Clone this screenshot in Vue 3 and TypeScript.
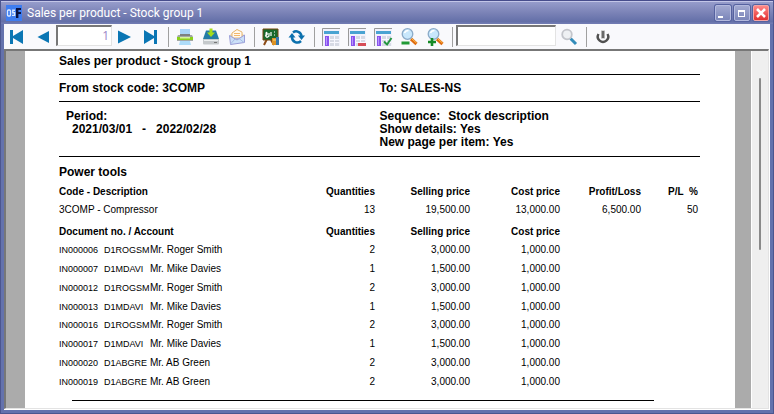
<script setup lang="ts">
import { ref } from 'vue'

interface Doc {
  no: string
  account: string
  name: string
  qty: string
  selling: string
  cost: string
}

const title = 'Sales per product - Stock group 1'
const page = ref('1')
const search = ref('')

const roger = { account: 'D1ROGSM', name: 'Mr. Roger Smith' }
const mike = { account: 'D1MDAVI', name: 'Mr. Mike Davies' }
const green = { account: 'D1ABGRE', name: 'Mr. AB Green' }
const two = { qty: '2', selling: '3,000.00', cost: '1,000.00' }
const one = { qty: '1', selling: '1,500.00', cost: '1,000.00' }

const docs: Doc[] = [
  { no: 'IN000006', ...roger, ...two },
  { no: 'IN000007', ...mike, ...one },
  { no: 'IN000012', ...roger, ...two },
  { no: 'IN000013', ...mike, ...one },
  { no: 'IN000016', ...roger, ...two },
  { no: 'IN000017', ...mike, ...one },
  { no: 'IN000020', ...green, ...two },
  { no: 'IN000019', ...green, ...two },
]
</script>

<template>
  <div class="window">
    <header class="titlebar">
      <svg class="logo" viewBox="0 0 16 16" aria-hidden="true">
        <rect width="16" height="16" fill="#3f7df0" />
        <rect x="1.5" y="5" width="3" height="6" rx="1" fill="none" stroke="#dbe8ff" stroke-width="1.3" />
        <path d="M9 5.3H6.8v2.5h1.8v2.6H6" fill="none" stroke="#dbe8ff" stroke-width="1.4" />
        <path d="M10 3h5v2h-2.6v2H15v2h-2.6v4H10z" fill="#0a1240" />
      </svg>
      <h1>{{ title }}</h1>
      <div class="controls">
        <button type="button" aria-label="Minimize">
          <svg viewBox="0 0 14 14"><path d="M2 10h5v2H2z" fill="#fff" /></svg>
        </button>
        <button type="button" aria-label="Maximize">
          <svg viewBox="0 0 14 14"><path d="M3 4h7v7H3zM4 6v4h5V6z" fill="#fff" fill-rule="evenodd" /></svg>
        </button>
        <button type="button" class="close" aria-label="Close">
          <svg viewBox="0 0 14 14"><path d="M3 3l8 8M11 3l-8 8" stroke="#fff" stroke-width="2.6" /></svg>
        </button>
      </div>
    </header>

    <div class="body">
      <nav class="toolbar">
        <button type="button" aria-label="First page">
          <svg viewBox="0 0 18 18"><path d="M2 2h3v6L15 2v14L5 10v6H2z" fill="#0b76b4" /></svg>
        </button>
        <button type="button" aria-label="Previous page">
          <svg viewBox="0 0 18 18"><path d="M15 3v12L3.500 9z" fill="#0b76b4" /></svg>
        </button>
        <input v-model="page" class="page" type="text" aria-label="Page number" />
        <button type="button" aria-label="Next page">
          <svg viewBox="0 0 18 18"><path d="M2 2.500v13L15 9z" fill="#0b76b4" /></svg>
        </button>
        <button type="button" aria-label="Last page">
          <svg viewBox="0 0 18 18"><path d="M15 2h-3v6L2 2v14l10-6v6h3z" fill="#0b76b4" /></svg>
        </button>
        <span class="sep"></span>
        <button type="button" aria-label="Print">
          <svg viewBox="0 0 18 18">
            <path d="M4 1h10v8H4z" fill="#a9d4f8" />
            <path d="M2 7h14l1 2v4H1V9z" fill="#a4a8a6" />
            <path d="M4 6h10v2H4z" fill="#7d8180" />
            <path d="M1 9h16v3H1z" fill="#8bd01c" />
            <path d="M4 9h10v1.500H4z" fill="#d6f59a" />
            <path d="M4 13h10l1 4H3z" fill="#aedcf9" />
          </svg>
        </button>
        <button type="button" aria-label="Save">
          <svg viewBox="0 0 18 18">
            <path d="M4 2.500h10L17 11H1z" fill="#237ba5" />
            <path d="M1 11h16v4.500a1 1 0 0 1-1 1H2a1 1 0 0 1-1-1z" fill="#c5c9cc" />
            <path d="M2 12h14v1H2z" fill="#eceff0" />
            <path d="M12 14.500h3" stroke="#777" />
            <path d="M7.500 0.500h3v4H13L9 9 5 4.500h2.500z" fill="#a4dc19" />
          </svg>
        </button>
        <button type="button" aria-label="E-mail">
          <svg viewBox="0 0 18 18">
            <path d="M2 7l7-6 7 6v7L2 16z" fill="#ecd9b6" />
            <path d="M4 5l5-3.500L14 4v6H4z" fill="#fffaf0" stroke="#e7b66e" />
            <path d="M6 5.500h6M6 7.500h6" stroke="#f3b86b" />
            <path d="M1.500 7.500L9 12l7.500-5v7.500l-14 2z" fill="#cbe0f8" stroke="#9a9dd8" />
            <path d="M2.500 16L7 11l4-.5 5 4" fill="none" stroke="#a6b9e3" />
          </svg>
        </button>
        <span class="sep"></span>
        <button type="button" aria-label="Design">
          <svg viewBox="0 0 18 18">
            <path d="M5 11l-3 6M9 12l3 5" stroke="#8c4b17" stroke-width="2" />
            <path d="M1 1h15v11H1z" fill="#17692c" stroke="#764710" />
            <path d="M3 8q3-1 2-3T4 7t3 1V5M9 4v4M12 4h1M12 7h1" fill="none" stroke="#fff" stroke-width="1.200" />
            <path d="M10 10h4v7h-4z" fill="#dc9225" />
            <path d="M14 9h3v8h-3z" fill="#3577ae" />
            <path d="M11 12h3" stroke="#f7d985" />
          </svg>
        </button>
        <button type="button" aria-label="Refresh">
          <svg viewBox="0 0 18 18">
            <path d="M5 4.500a5.300 5.300 0 0 1 8.500 3.500M13 13a5.300 5.300 0 0 1-9-4" fill="none" stroke="#0c70ad" stroke-width="2.500" />
            <path d="M10 7.500h7L13.500 12z" fill="#0c70ad" />
            <path d="M0.500 9.500h7L4 5z" fill="#0c70ad" />
          </svg>
        </button>
        <span class="sep"></span>
        <button v-for="kind in ['header', 'footer', 'check']" :key="kind" type="button" :aria-label="'Toggle ' + kind">
          <svg class="layout" viewBox="0 0 20 20">
            <path d="M1 19V1h18v18z" fill="#f2f2fb" />
            <path d="M1.500 19V1.500H19" fill="none" stroke="#999" />
            <path d="M3 4h15v3H3z" fill="#4aa3d2" />
            <path d="M4 9h4v10H4z" fill="#8a53ef" />
            <path d="M5 10h1v8H5z" fill="#b797fb" />
            <path d="M9 9h9v10H9z" fill="#d7dae5" />
            <path d="M9 12.500h9M9 15.500h9M13.500 9v10" stroke="#f8f8ff" />
            <path v-if="kind === 'footer'" d="M11 16h8v3h-8z" fill="#d64d58" />
            <path v-if="kind === 'check'" d="M11 14.500l3 3L18.500 11" fill="none" stroke="#249540" stroke-width="2" />
          </svg>
        </button>
        <button v-for="sign in ['out', 'in']" :key="sign" type="button" :aria-label="'Zoom ' + sign">
          <svg viewBox="0 0 18 18">
            <path d="M11 11l5.500 5" stroke="#df6b12" stroke-width="3.200" />
            <path d="M11.500 10.500l5 4.500" stroke="#ffc34d" />
            <circle cx="7.500" cy="6" r="5.300" fill="#c8e7fc" stroke="#8baac8" stroke-width="1.300" />
            <path d="M4.500 5q1-2.500 4-2.500" fill="none" stroke="#fff" stroke-width="1.500" />
            <path v-if="sign === 'out'" d="M1.500 15h8" stroke="#229a36" stroke-width="3" />
            <path v-else d="M2 14h8M6 10v8" stroke="#168a27" stroke-width="2.600" />
          </svg>
        </button>
        <span class="sep"></span>
        <input v-model="search" class="search" type="text" aria-label="Search text" />
        <button type="button" aria-label="Search">
          <svg viewBox="0 0 18 18">
            <path d="M10.500 10.500l5.500 5.500" stroke="#338cba" stroke-width="3" />
            <circle cx="7" cy="6.500" r="4.800" fill="#eef0f3" stroke="#c3c5cb" stroke-width="1.800" />
          </svg>
        </button>
        <span class="sep"></span>
        <button type="button" aria-label="Close report">
          <svg viewBox="0 0 18 18">
            <path d="M4.500 6a5.200 5.200 0 1 0 9 0" fill="none" stroke="#505050" stroke-width="2.400" />
            <path d="M9 2.500v8" stroke="#b0b0b0" stroke-width="4" />
            <path d="M9 3v7" stroke="#686868" stroke-width="2" />
          </svg>
        </button>
      </nav>

      <main class="viewer">
        <article class="paper">
          <h2 class="heading">{{ title }}</h2>
          <section class="range">
            <span>From stock code: 3COMP</span>
            <span>To: SALES-NS</span>
          </section>
          <section class="criteria">
            <div class="period">
              <p>Period:</p>
              <p class="dates"><span>2021/03/01</span><span>-</span><span>2022/02/28</span></p>
            </div>
            <div>
              <p class="sequence"><span>Sequence:</span><span>Stock description</span></p>
              <p>Show details: Yes</p>
              <p>New page per item: Yes</p>
            </div>
          </section>

          <h3>Power tools</h3>
          <table class="summary">
            <colgroup>
              <col /><col class="c-qty" /><col class="c-sell" /><col class="c-cost" /><col class="c-profit" /><col class="c-pct" />
            </colgroup>
            <thead>
              <tr><th>Code - Description</th><th>Quantities</th><th>Selling price</th><th>Cost price</th><th>Profit/Loss</th><th>P/L&nbsp; %</th></tr>
            </thead>
            <tbody>
              <tr><td>3COMP - Compressor</td><td>13</td><td>19,500.00</td><td>13,000.00</td><td>6,500.00</td><td>50</td></tr>
            </tbody>
          </table>

          <table class="details">
            <colgroup>
              <col /><col class="c-qty" /><col class="c-sell" /><col class="c-cost" /><col class="c-profit" /><col class="c-pct" />
            </colgroup>
            <thead>
              <tr><th>Document no. / Account</th><th>Quantities</th><th>Selling price</th><th>Cost price</th><td></td><td></td></tr>
            </thead>
            <tbody>
              <tr v-for="doc in docs" :key="doc.no">
                <td>
                  <div class="doc">
                    <span class="code">{{ doc.no }}</span>
                    <span class="code">{{ doc.account }}</span>
                    <span>{{ doc.name }}</span>
                  </div>
                </td>
                <td>{{ doc.qty }}</td>
                <td>{{ doc.selling }}</td>
                <td>{{ doc.cost }}</td>
                <td></td>
                <td></td>
              </tr>
            </tbody>
          </table>
          <hr />
        </article>
        <div class="scrollbar"><div class="thumb"></div></div>
      </main>
    </div>
  </div>
</template>

<style>
body {
  margin: 0;
}
</style>

<style scoped>
* {
  box-sizing: border-box;
}
.window {
  display: flex;
  flex-direction: column;
  min-height: 100vh;
  padding: 0 3px 3px;
  border: 1px solid #4c568f;
  border-top-color: #474d8c;
  background: #6472ad;
  font-family: "Liberation Sans", Arial, sans-serif;
  color: #000;
}
.titlebar {
  display: flex;
  align-items: center;
  height: 23px;
  margin: 0 -3px;
  padding: 0 4px 0 5px;
  border-top: 1px solid #c3c6e8;
  background: linear-gradient(#969ccb, #7a82b6 50%, #626ea7 92%, #8089bd 96%, #5a66a4);
}
.logo {
  width: 16px;
  height: 16px;
}
h1 {
  flex: 1;
  margin: 0 0 0 5px;
  font: 400 12px/16px Roboto, "Noto Sans", sans-serif;
  color: #fff;
}
.controls {
  display: flex;
  gap: 3px;
}
.controls button {
  width: 16px;
  height: 16px;
  padding: 0;
  border: 1px solid #b3b9de;
  border-radius: 2px;
  background: linear-gradient(#a2a9d1, #7b86b9);
  box-shadow: 0 0 0 1px #5662a0;
}
.controls button.close {
  border-color: #f4a4a4;
  background: linear-gradient(#f88, #e23030);
}
.controls svg {
  display: block;
  width: 14px;
  height: 14px;
}
.body {
  flex: 1;
  display: flex;
  flex-direction: column;
  background: #fff;
}
.toolbar {
  display: flex;
  align-items: center;
  height: 25px;
  background: #f9f9fc;
}
.toolbar button {
  display: flex;
  align-items: center;
  justify-content: center;
  flex: none;
  width: 26px;
  height: 24px;
  padding: 0;
  border: 0;
  background: none;
}
.toolbar button svg {
  flex: none;
  width: 18px;
  height: 18px;
}
.toolbar button svg.layout {
  width: 20px;
  height: 20px;
}
.toolbar input {
  height: 21px;
  margin: 0 0 3px;
  padding: 0 4px;
  border: 1px solid #e3e3e3;
  border-top: 2px solid #777;
  border-left: 2px solid #777;
  background: #fff;
  font: 12px "Open Sans", sans-serif;
  color: #9a86c8;
  outline: 0;
}
.toolbar .page {
  width: 56px;
  padding: 0 2px;
  text-align: right;
}
.toolbar .search {
  width: 100px;
}
.sep {
  flex: none;
  width: 1px;
  height: 20px;
  margin: 0 3px 0 4px;
  background: #a0a0a0;
}
.viewer {
  flex: 1;
  display: flex;
  margin: 0 1px 1px 0;
  border: 1px solid #e3e3e3;
  border-top: 2px solid #777;
  border-left: 2px solid #777;
  background: #ababab;
}
.paper {
  flex: 1;
  margin: 0 16px 0 19px;
  padding: 4px 35px 7px 34px;
  background: #fff;
  font-size: 12px;
  line-height: 13px;
}
h2,
h3,
p {
  margin: 0;
  font-size: 12px;
}
.heading {
  padding-bottom: 6px;
}
.range,
.criteria {
  display: grid;
  grid-template-columns: 1fr 1fr;
  border-top: 1px solid #000;
  font-weight: 700;
}
.range {
  padding: 7px 0 6px;
}
.criteria {
  padding: 8px 0 7px;
  border-bottom: 1px solid #000;
}
.period {
  padding-left: 7px;
}
.dates {
  display: flex;
  gap: 10px;
  padding-left: 6px;
}
.sequence {
  display: flex;
  gap: 8px;
}
h3 {
  padding: 9px 0 4px;
}
table {
  width: 100%;
  table-layout: fixed;
  border-collapse: collapse;
  font-size: 10px;
  line-height: 12px;
}
th,
td {
  padding: 0;
  text-align: right;
  white-space: nowrap;
}
th:first-child,
td:first-child {
  text-align: left;
}
th:last-child,
td:last-child {
  padding-right: 2px;
}
.summary tr,
.details thead tr {
  height: 18px;
}
.details {
  height: 168px;
  margin-top: 4px;
}
.c-qty {
  width: 96px;
}
.c-sell {
  width: 95px;
}
.c-cost {
  width: 90px;
}
.c-profit {
  width: 81px;
}
.c-pct {
  width: 59px;
}
.doc {
  display: grid;
  grid-template-columns: 45px 46px 1fr;
  align-items: baseline;
}
.code {
  font-size: 9px;
}
hr {
  height: 1px;
  margin: 9px 46px 0 13px;
  border: 0;
  background: #000;
}
.scrollbar {
  width: 17px;
  padding: 27px 7px 0;
  border-left: 1px solid #fff;
  background: #efefef;
}
.thumb {
  width: 2px;
  height: 172px;
  border-radius: 1px;
  background: #8a8a8a;
}
</style>
